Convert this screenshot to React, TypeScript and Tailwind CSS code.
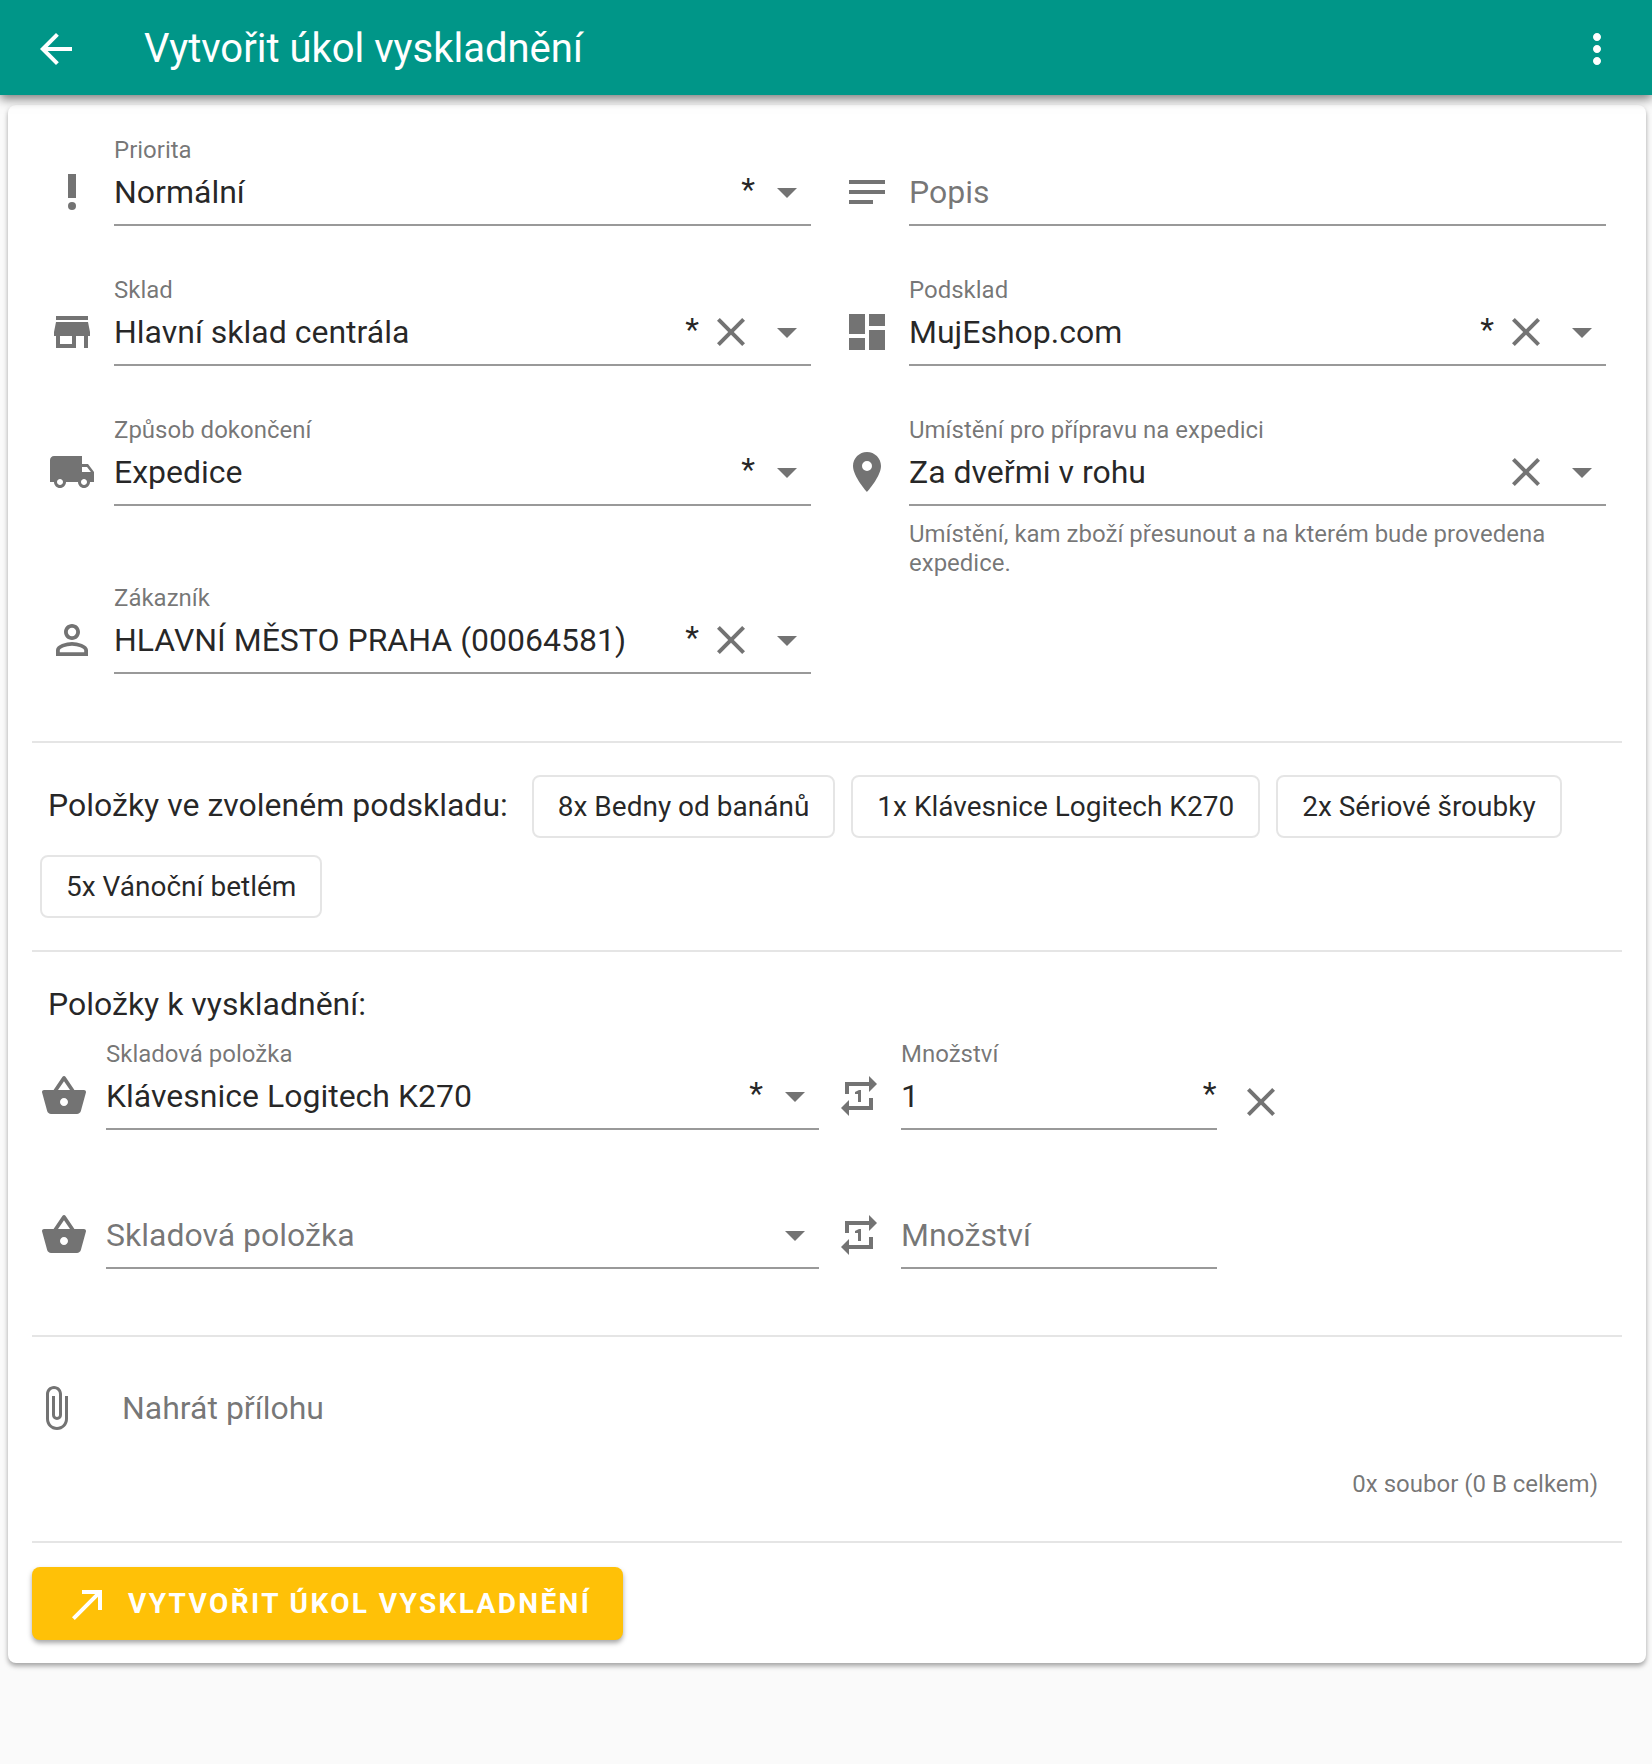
import type { ReactNode } from "react";
import {
  MdArrowBack,
  MdArrowDropDown,
  MdAttachFile,
  MdCallMade,
  MdClose,
  MdDashboard,
  MdLocalShipping,
  MdMoreVert,
  MdNotes,
  MdPersonOutline,
  MdPlace,
  MdPriorityHigh,
  MdRepeatOne,
  MdShoppingBasket,
  MdStore,
} from "react-icons/md";

type FieldProps = {
  id: string;
  label: string;
  icon: ReactNode;
  value?: string;
  select?: boolean;
  required?: boolean;
  clearable?: boolean;
  hint?: string;
};

function Field({ id, label, icon, value = "", select, required, clearable, hint }: FieldProps) {
  const text = "h-14 w-full min-w-0 flex-1 appearance-none bg-transparent text-[32px] text-black/85 outline-none";
  return (
    <div className="flex gap-[18px]">
      <span className="mt-8 flex h-12 shrink-0 text-5xl text-black/55">{icon}</span>
      <div className="min-w-0 flex-1">
        <div className="h-7 text-2xl leading-7 text-black/55">{value && <label htmlFor={id}>{label}</label>}</div>
        <div className="relative flex h-[62px] items-center gap-2 border-b-2 border-black/40 pb-1">
          {!value && (
            <label
              htmlFor={id}
              className="pointer-events-none absolute top-0 left-0 text-[32px] leading-14 text-black/55"
            >
              {label}
            </label>
          )}
          {select ? (
            <select id={id} defaultValue={value} className={text}>
              <option value={value}>{value}</option>
            </select>
          ) : (
            <input id={id} defaultValue={value} className={text} />
          )}
          {required && <span className="pb-1.5 text-[32px] leading-14 text-black/85">*</span>}
          {clearable && (
            <button type="button" aria-label={`Vymazat: ${label}`} className="text-5xl text-black/55">
              <MdClose />
            </button>
          )}
          {select && <MdArrowDropDown aria-hidden className="pointer-events-none shrink-0 text-5xl text-black/55" />}
        </div>
        {hint && <p className="mt-[14px] text-2xl leading-[29px] text-black/55">{hint}</p>}
      </div>
    </div>
  );
}

function Chip({ children }: { children: ReactNode }) {
  return (
    <button
      type="button"
      className="h-[63px] rounded-lg border-2 border-black/10 px-6 text-[28px] leading-none whitespace-nowrap text-black/85"
    >
      {children}
    </button>
  );
}

function Divider() {
  return <hr className="border-t-2 border-black/10" />;
}

export default function App() {
  return (
    <div className="min-h-screen bg-[#fafafa] font-[Roboto,sans-serif] text-black/85">
      <header className="relative flex h-[95px] items-center bg-[#009688] pt-0.5 pr-[31px] pl-8 text-white shadow-[0_4px_10px_rgba(0,0,0,0.5)]">
        <button type="button" aria-label="Zpět" className="text-5xl">
          <MdArrowBack />
        </button>
        <h1 className="ml-16 flex-1 text-[40px] leading-none">Vytvořit úkol vyskladnění</h1>
        <button type="button" aria-label="Další možnosti" className="text-5xl">
          <MdMoreVert />
        </button>
      </header>

      <main className="mt-[10px] mr-[6px] ml-2 rounded-lg bg-white px-6 pb-[23px] shadow-[0_3px_5px_rgba(0,0,0,0.35)]">
        <form onSubmit={(e) => e.preventDefault()}>
          <section className="grid grid-cols-2 pt-[31px] pb-[67px]">
            <div className="px-4 pb-[50px]">
              <Field id="priorita" label="Priorita" value="Normální" icon={<MdPriorityHigh />} select required />
            </div>
            <div className="px-4 pb-[50px]">
              <Field id="popis" label="Popis" icon={<MdNotes />} />
            </div>
            <div className="px-4 pb-[50px]">
              <Field id="sklad" label="Sklad" value="Hlavní sklad centrála" icon={<MdStore />} select required clearable />
            </div>
            <div className="px-4 pb-[50px]">
              <Field id="podsklad" label="Podsklad" value="MujEshop.com" icon={<MdDashboard />} select required clearable />
            </div>
            <div className="px-4">
              <Field id="zpusob" label="Způsob dokončení" value="Expedice" icon={<MdLocalShipping />} select required />
            </div>
            <div className="px-4 pb-[6px]">
              <Field
                id="umisteni"
                label="Umístění pro přípravu na expedici"
                value="Za dveřmi v rohu"
                icon={<MdPlace />}
                select
                clearable
                hint="Umístění, kam zboží přesunout a na kterém bude provedena expedice."
              />
            </div>
            <div className="px-4">
              <Field
                id="zakaznik"
                label="Zákazník"
                value="HLAVNÍ MĚSTO PRAHA (00064581)"
                icon={<MdPersonOutline />}
                select
                required
                clearable
              />
            </div>
          </section>

          <Divider />
          <section className="flex flex-wrap items-center gap-x-4 gap-y-[17px] px-2 py-8">
            <h2 className="pr-2 pb-1 pl-2 text-[32px] leading-10">Položky ve zvoleném podskladu:</h2>
            <Chip>8x Bedny od banánů</Chip>
            <Chip>1x Klávesnice Logitech K270</Chip>
            <Chip>2x Sériové šroubky</Chip>
            <Chip>5x Vánoční betlém</Chip>
          </section>

          <Divider />
          <section className="pt-8 pb-[66px]">
            <h2 className="px-4 text-[32px] leading-10">Položky k vyskladnění:</h2>
            <div className="grid grid-cols-4 pt-4 pb-[49px]">
              <div className="col-span-2 px-2">
                <Field
                  id="polozka-1"
                  label="Skladová položka"
                  value="Klávesnice Logitech K270"
                  icon={<MdShoppingBasket />}
                  select
                  required
                />
              </div>
              <div className="px-2">
                <Field id="mnozstvi-1" label="Množství" value="1" icon={<MdRepeatOne />} required />
              </div>
              <div className="flex items-start px-3 pt-[38px]">
                <button type="button" aria-label="Odebrat položku" className="text-5xl text-black/55">
                  <MdClose />
                </button>
              </div>
            </div>
            <div className="grid grid-cols-4">
              <div className="col-span-2 px-2">
                <Field id="polozka-2" label="Skladová položka" icon={<MdShoppingBasket />} select />
              </div>
              <div className="px-2">
                <Field id="mnozstvi-2" label="Množství" icon={<MdRepeatOne />} />
              </div>
            </div>
          </section>

          <Divider />
          <section className="pt-[47px] pb-[43px]">
            <button type="button" className="flex items-center gap-[42px] text-[32px] leading-12 text-black/55">
              <MdAttachFile className="text-5xl" />
              Nahrát přílohu
            </button>
            <p className="pt-[38px] pr-6 text-right text-2xl leading-7 text-black/55">0x soubor (0 B celkem)</p>
          </section>

          <Divider />
          <button
            type="submit"
            className="mt-6 flex h-[73px] items-center gap-4 rounded-lg bg-[#ffc107] px-8 text-[28px] font-bold tracking-[0.085em] text-white uppercase shadow-[0_3px_5px_rgba(0,0,0,0.35)]"
          >
            <MdCallMade className="text-5xl" />
            Vytvořit úkol vyskladnění
          </button>
        </form>
      </main>
    </div>
  );
}
